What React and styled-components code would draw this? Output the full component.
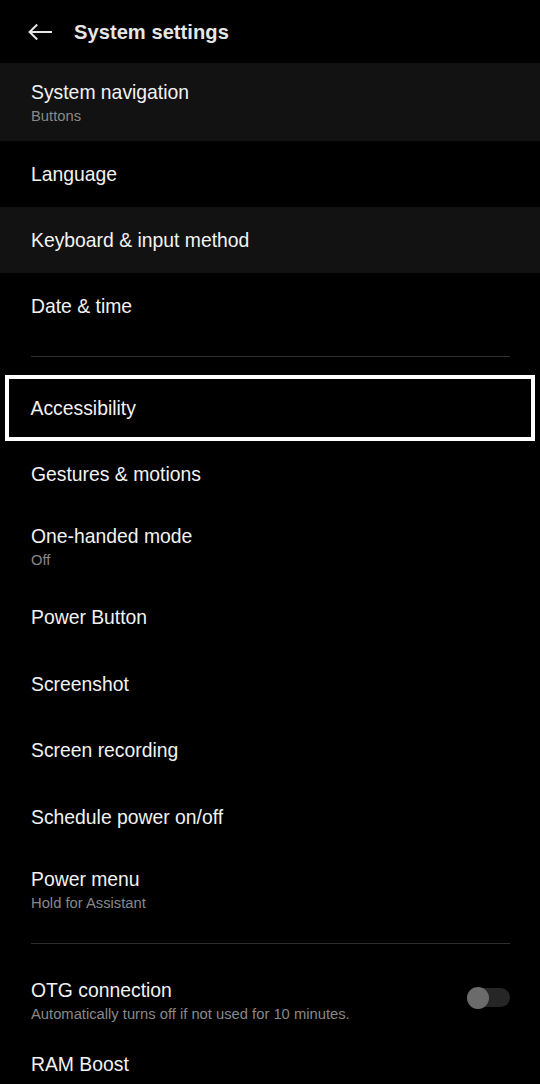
import React from "react";
import styled, { createGlobalStyle } from "styled-components";

const Global = createGlobalStyle`
  html, body { margin: 0; padding: 0; background: #000; }
  body { font-family: "Liberation Sans", Arial, sans-serif; -webkit-font-smoothing: antialiased; }
  * { box-sizing: border-box; }
`;

const Screen = styled.div`
  width: 540px;
  height: 1084px;
  overflow: hidden;
  background: #000;
  display: flex;
  flex-direction: column;
`;

const Header = styled.header`
  height: 63px;
  flex: none;
  display: flex;
  align-items: center;
  padding-left: 28px;
  gap: 22px;
  background: #000;
`;

const BackIcon = styled.svg`
  width: 24px;
  height: 16px;
  display: block;
`;

const Title = styled.h1`
  margin: 0;
  font-size: 20.1px;
  font-weight: 700;
  color: #e6e6e6;
  line-height: 24px;
  letter-spacing: 0.05px;
`;

const Row = styled.div`
  height: ${(p) => p.$h}px;
  flex: none;
  display: flex;
  align-items: center;
  background: ${(p) => (p.$shade ? "#121212" : "#000")};
  padding: 0 30px 0 31px;
  ${(p) =>
    p.$focused &&
    `
    margin: 0 5px;
    border: 4.5px solid #ffffff;
    padding-left: 21.5px;
  `}
`;

const TextCol = styled.div`
  flex: 1;
  display: flex;
  flex-direction: column;
  align-self: ${(p) => (p.$two ? "flex-start" : "center")};
  padding-top: ${(p) => (p.$two ? "16.5px" : "0.5px")};
  gap: 2px;
  min-width: 0;
`;

const ItemTitle = styled.div`
  font-size: 19.35px;
  line-height: 24px;
  color: #f2f2f2;
  white-space: nowrap;
`;

const ItemSub = styled.div`
  font-size: 14.75px;
  line-height: 20px;
  color: #888888;
  white-space: nowrap;
`;

const Divider = styled.div`
  height: ${(p) => p.$h}px;
  flex: none;
  padding: 17px 30px 0 31px;
`;

const Line = styled.div`
  height: 1px;
  background: #2e2e2e;
`;

const Toggle = styled.div`
  width: 43px;
  height: 19px;
  border-radius: 10px;
  background: #262626;
  position: relative;
  flex: none;
  margin-top: 3px;
`;

const Knob = styled.div`
  position: absolute;
  left: 0;
  top: -1.5px;
  width: 22px;
  height: 22px;
  border-radius: 50%;
  background: #6b6b6b;
`;

const items = [
  { type: "row", title: "System navigation", sub: "Buttons", h: 78, shade: true },
  { type: "row", title: "Language", h: 66 },
  { type: "row", title: "Keyboard & input method", h: 66, shade: true },
  { type: "row", title: "Date & time", h: 66 },
  { type: "div", h: 36 },
  { type: "row", title: "Accessibility", h: 66, focused: true },
  { type: "row", title: "Gestures & motions", h: 66 },
  { type: "row", title: "One-handed mode", sub: "Off", h: 77 },
  { type: "row", title: "Power Button", h: 66 },
  { type: "row", title: "Screenshot", h: 67 },
  { type: "row", title: "Screen recording", h: 66 },
  { type: "row", title: "Schedule power on/off", h: 67 },
  { type: "row", title: "Power menu", sub: "Hold for Assistant", h: 76 },
  { type: "div", h: 35 },
  {
    type: "row",
    title: "OTG connection",
    sub: "Automatically turns off if not used for 10 minutes.",
    h: 70,
    toggle: true,
  },
  { type: "row", title: "RAM Boost", h: 66 },
];

export default function App() {
  return (
    <>
      <Global />
      <Screen>
        <Header>
          <BackIcon viewBox="0 0 24 16" fill="none">
            <path
              d="M23 8H2M8.5 1.2L1.6 8l6.9 6.8"
              stroke="#e6e6e6"
              strokeWidth="2"
              strokeLinecap="square"
            />
          </BackIcon>
          <Title>System settings</Title>
        </Header>
        {items.map((it, i) =>
          it.type === "div" ? (
            <Divider key={i} $h={it.h}>
              <Line />
            </Divider>
          ) : (
            <Row key={i} $h={it.h} $shade={it.shade} $focused={it.focused}>
              <TextCol $two={!!it.sub}>
                <ItemTitle>{it.title}</ItemTitle>
                {it.sub && <ItemSub>{it.sub}</ItemSub>}
              </TextCol>
              {it.toggle && (
                <Toggle>
                  <Knob />
                </Toggle>
              )}
            </Row>
          )
        )}
      </Screen>
    </>
  );
}
